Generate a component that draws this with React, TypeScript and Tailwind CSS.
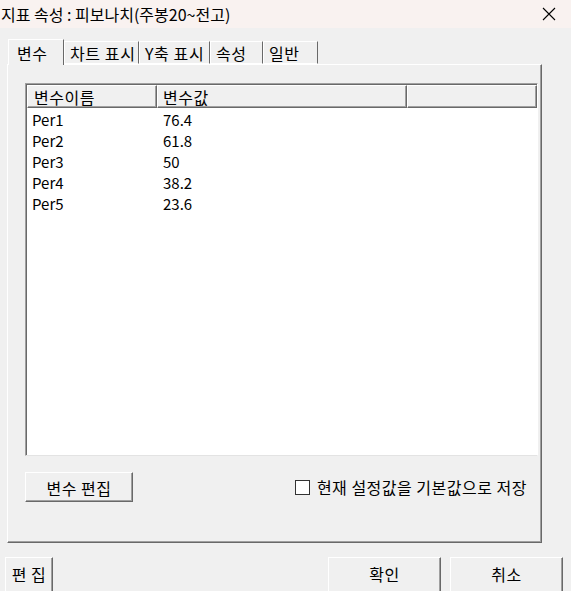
import { useState } from 'react'

const font = { fontFamily: '"Noto Sans CJK KR", "Noto Sans", sans-serif' }

type Row = { name: string; value: string }

const rows: Row[] = [
  { name: 'Per1', value: '76.4' },
  { name: 'Per2', value: '61.8' },
  { name: 'Per3', value: '50' },
  { name: 'Per4', value: '38.2' },
  { name: 'Per5', value: '23.6' },
]

const tabs = [
  { label: '변수', w: 'w-[56px]' },
  { label: '차트 표시', w: 'w-[75px]' },
  { label: 'Y축 표시', w: 'w-[71px]' },
  { label: '속성', w: 'w-[53px]' },
  { label: '일반', w: 'w-[55px]' },
]

// classic raised 3D edge: white top/left, dark bottom/right
const raised =
  'border-t border-l border-t-white border-l-white border-r border-b border-r-[#696969] border-b-[#696969] shadow-[inset_-1px_-1px_#a0a0a0]'

function Button({ label, className }: { label: string; className: string }) {
  return (
    <button className={`${raised} bg-[#f0f0f0] text-[16px] tracking-[0.5px] text-black flex items-center justify-center ${className}`}>
      {label}
    </button>
  )
}

export default function App() {
  const [active, setActive] = useState(0)
  const [saveDefault, setSaveDefault] = useState(false)

  return (
    <div className="w-[571px] h-[591px] bg-[#f0f0f0] overflow-hidden flex flex-col text-black" style={font}>
      {/* title bar */}
      <div className="h-[28px] bg-[#f9f2f0] flex items-center justify-between pl-[1px] pr-[15px] shrink-0">
        <span className="text-[16px] leading-none">지표 속성 : 피보나치(주봉20~전고)</span>
        <svg width="14" height="14" viewBox="0 0 14 14" className="text-black">
          <path d="M1 1L13 13M13 1L1 13" stroke="currentColor" strokeWidth="1.1" />
        </svg>
      </div>

      {/* tabs */}
      <div className="flex items-end h-[25px] ml-[8px] mt-[11px] shrink-0 relative z-10">
        {tabs.map((t, i) => (
          <button
            key={t.label}
            onClick={() => setActive(i)}
            className={`${t.w} flex items-center text-[16px] tracking-[0.6px] bg-[#f0f0f0] border-t border-l border-t-white border-l-white border-r border-r-[#696969] ${
              i === active ? 'h-[26px] -mb-[1px] pl-[8px]' : 'h-[23px] pl-[5px] border-b border-b-white'
            }`}
          >
            {t.label}
          </button>
        ))}
      </div>

      {/* tab panel */}
      <div className={`ml-[7px] w-[535px] h-[479px] shrink-0 flex flex-col ${raised} pl-[17px] pt-[18px]`}>
        {/* list view */}
        <div className="w-[513px] h-[373px] bg-white border-t border-l border-t-[#a0a0a0] border-l-[#a0a0a0] border-r border-b border-r-white border-b-[#e3e3e3] shadow-[inset_1px_1px_#696969] pl-[1px] pt-[1px] flex flex-col">
          <div className="flex h-[23px] text-[16px] tracking-[0.5px] shrink-0">
            <div className={`w-[130px] ${raised} bg-[#f0f0f0] pl-[6px] flex items-center`}>변수이름</div>
            <div className={`w-[250px] ${raised} bg-[#f0f0f0] pl-[5px] flex items-center`}>변수값</div>
            <div className={`w-[130px] ${raised} bg-[#f0f0f0]`} />
          </div>
          <div className="pt-[2px] text-[15px]">
            {rows.map(r => (
              <div key={r.name} className="flex h-[21px] items-center">
                <span className="w-[136px] pl-[5px]">{r.name}</span>
                <span>{r.value}</span>
              </div>
            ))}
          </div>
        </div>

        <div className="flex items-center mt-[16px]">
          <Button label="변수 편집" className="w-[108px] h-[30px] pt-[1px]" />
          <label className="ml-auto mr-[14px] flex items-center gap-[7px] text-[16px] tracking-[0.5px]">
            <span
              onClick={() => setSaveDefault(v => !v)}
              className="w-[15px] h-[15px] bg-white border border-[#333] flex items-center justify-center text-[11px] leading-none"
            >
              {saveDefault ? '✓' : ''}
            </span>
            현재 설정값을 기본값으로 저장
          </label>
        </div>
      </div>

      {/* dialog buttons */}
      <div className="flex mt-[14px] pl-[5px] pr-[8px] shrink-0">
        <Button label="편 집" className="w-[48px] h-[40px] pb-[6px]" />
        <Button label="확인" className="ml-auto w-[113px] h-[40px] pb-[6px]" />
        <Button label="취소" className="ml-[9px] w-[113px] h-[40px] pb-[6px]" />
      </div>
    </div>
  )
}
